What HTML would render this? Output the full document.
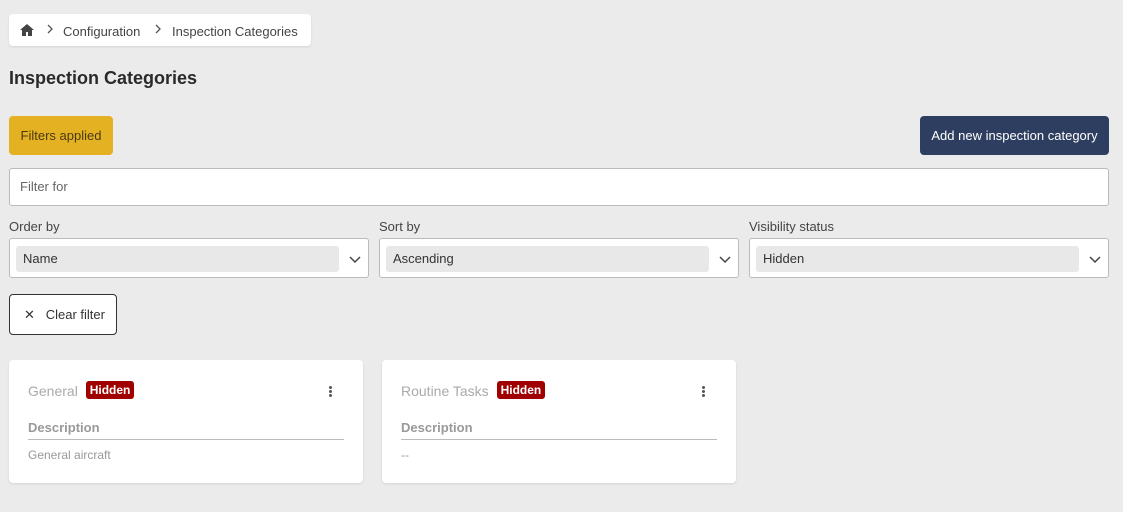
<!DOCTYPE html>
<html><head><style>
*{box-sizing:border-box;margin:0;padding:0}
body{width:1123px;height:512px;background:#ebebeb;font-family:"Liberation Sans",sans-serif;color:#333;position:relative;overflow:hidden;font-size:13px}
.a{position:absolute}
.bc{left:9px;top:14px;width:302px;height:32px;background:#fff;border-radius:4px;box-shadow:0 1px 2px rgba(0,0,0,.1);font-size:13px;color:#444}
h1{position:absolute;left:9px;top:68px;font-size:18px;font-weight:bold;color:#2a2a2a}
.fa{left:9px;top:116px;width:104px;height:39px;background:#e3b122;border-radius:4px;color:#4a3a10;font-size:13px;line-height:39px;text-align:center}
.add{left:920px;top:116px;width:189px;height:39px;background:#2e3e60;border-radius:4px;color:#fff;font-size:13px;line-height:39px;text-align:center}
.inp{left:9px;top:168px;width:1100px;height:38px;background:#fff;border:1px solid #bbb;border-radius:3px;padding-left:10px;line-height:36px;color:#666}
.lbl{top:219px;font-size:13px;color:#444}
.sel{top:238px;width:360px;height:40px;background:#fff;border:1px solid #bbb;border-radius:3px}
.sel .v{position:absolute;left:6px;top:7px;width:323px;height:26px;background:#e8e8e8;border-radius:3px;padding-left:7px;line-height:26px;font-size:13px;color:#333}
.sel svg{position:absolute;right:6px;top:13px}
.cf{left:9px;top:294px;width:108px;height:41px;border:1px solid #333;border-radius:4px;background:#fff;line-height:39px;font-size:13px;color:#333;padding-left:14px}
.card{top:360px;width:354px;height:123px;background:#fff;border-radius:4px;box-shadow:0 1px 2px rgba(0,0,0,.1)}
.card .t{position:absolute;left:19px;top:21px;font-size:14px;color:#aaa}
.tag{display:inline-block;background:#a00000;color:#fff;font-weight:bold;font-size:12px;padding:0 4px;border-radius:3px;line-height:18px;margin-left:4px;vertical-align:2px}
.card .d{position:absolute;left:19px;top:60px;width:316px;border-bottom:1px solid #bbb;padding-bottom:4px;font-weight:bold;color:#999;font-size:13px}
.card .dv{position:absolute;left:19px;top:88px;color:#999;font-size:12px}
.dots{position:absolute;left:320px;top:26px;width:3px}
.dots i{display:block;width:3px;height:3px;background:#555;border-radius:50%;margin-bottom:1px}
</style></head><body>
<div class="a bc">
<svg class="a" style="left:11px;top:10px" width="14" height="12" viewBox="0 0 14 12"><path d="M7 0L0 6h2v6h4V8h2v4h4V6h2z" fill="#444"/></svg>
<svg class="a" style="left:37px;top:10px" width="8" height="10" viewBox="0 0 8 10"><path d="M2 1l4 4-4 4" stroke="#555" stroke-width="1.3" fill="none"/></svg>
<span class="a" style="left:54px;top:10px">Configuration</span>
<svg class="a" style="left:145px;top:10px" width="8" height="10" viewBox="0 0 8 10"><path d="M2 1l4 4-4 4" stroke="#555" stroke-width="1.3" fill="none"/></svg>
<span class="a" style="left:163px;top:10px">Inspection Categories</span>
</div>
<h1>Inspection Categories</h1>
<div class="a fa">Filters applied</div>
<div class="a add">Add new inspection category</div>
<div class="a inp">Filter for</div>
<div class="a lbl" style="left:9px">Order by</div>
<div class="a lbl" style="left:379px">Sort by</div>
<div class="a lbl" style="left:749px">Visibility status</div>
<div class="a sel" style="left:9px"><div class="v">Name</div><svg width="14" height="14" viewBox="0 0 14 14"><path d="M2 5l5 5 5-5" stroke="#444" stroke-width="1.5" fill="none"/></svg></div>
<div class="a sel" style="left:379px"><div class="v">Ascending</div><svg width="14" height="14" viewBox="0 0 14 14"><path d="M2 5l5 5 5-5" stroke="#444" stroke-width="1.5" fill="none"/></svg></div>
<div class="a sel" style="left:749px"><div class="v">Hidden</div><svg width="14" height="14" viewBox="0 0 14 14"><path d="M2 5l5 5 5-5" stroke="#444" stroke-width="1.5" fill="none"/></svg></div>
<div class="a cf">✕&nbsp;&nbsp;&nbsp;Clear filter</div>
<div class="a card" style="left:9px"><div class="t">General <span class="tag">Hidden</span></div><div class="dots"><i></i><i></i><i></i></div><div class="d">Description</div><div class="dv">General aircraft</div></div>
<div class="a card" style="left:382px"><div class="t">Routine Tasks <span class="tag">Hidden</span></div><div class="dots"><i></i><i></i><i></i></div><div class="d">Description</div><div class="dv">--</div></div>
</body></html>
